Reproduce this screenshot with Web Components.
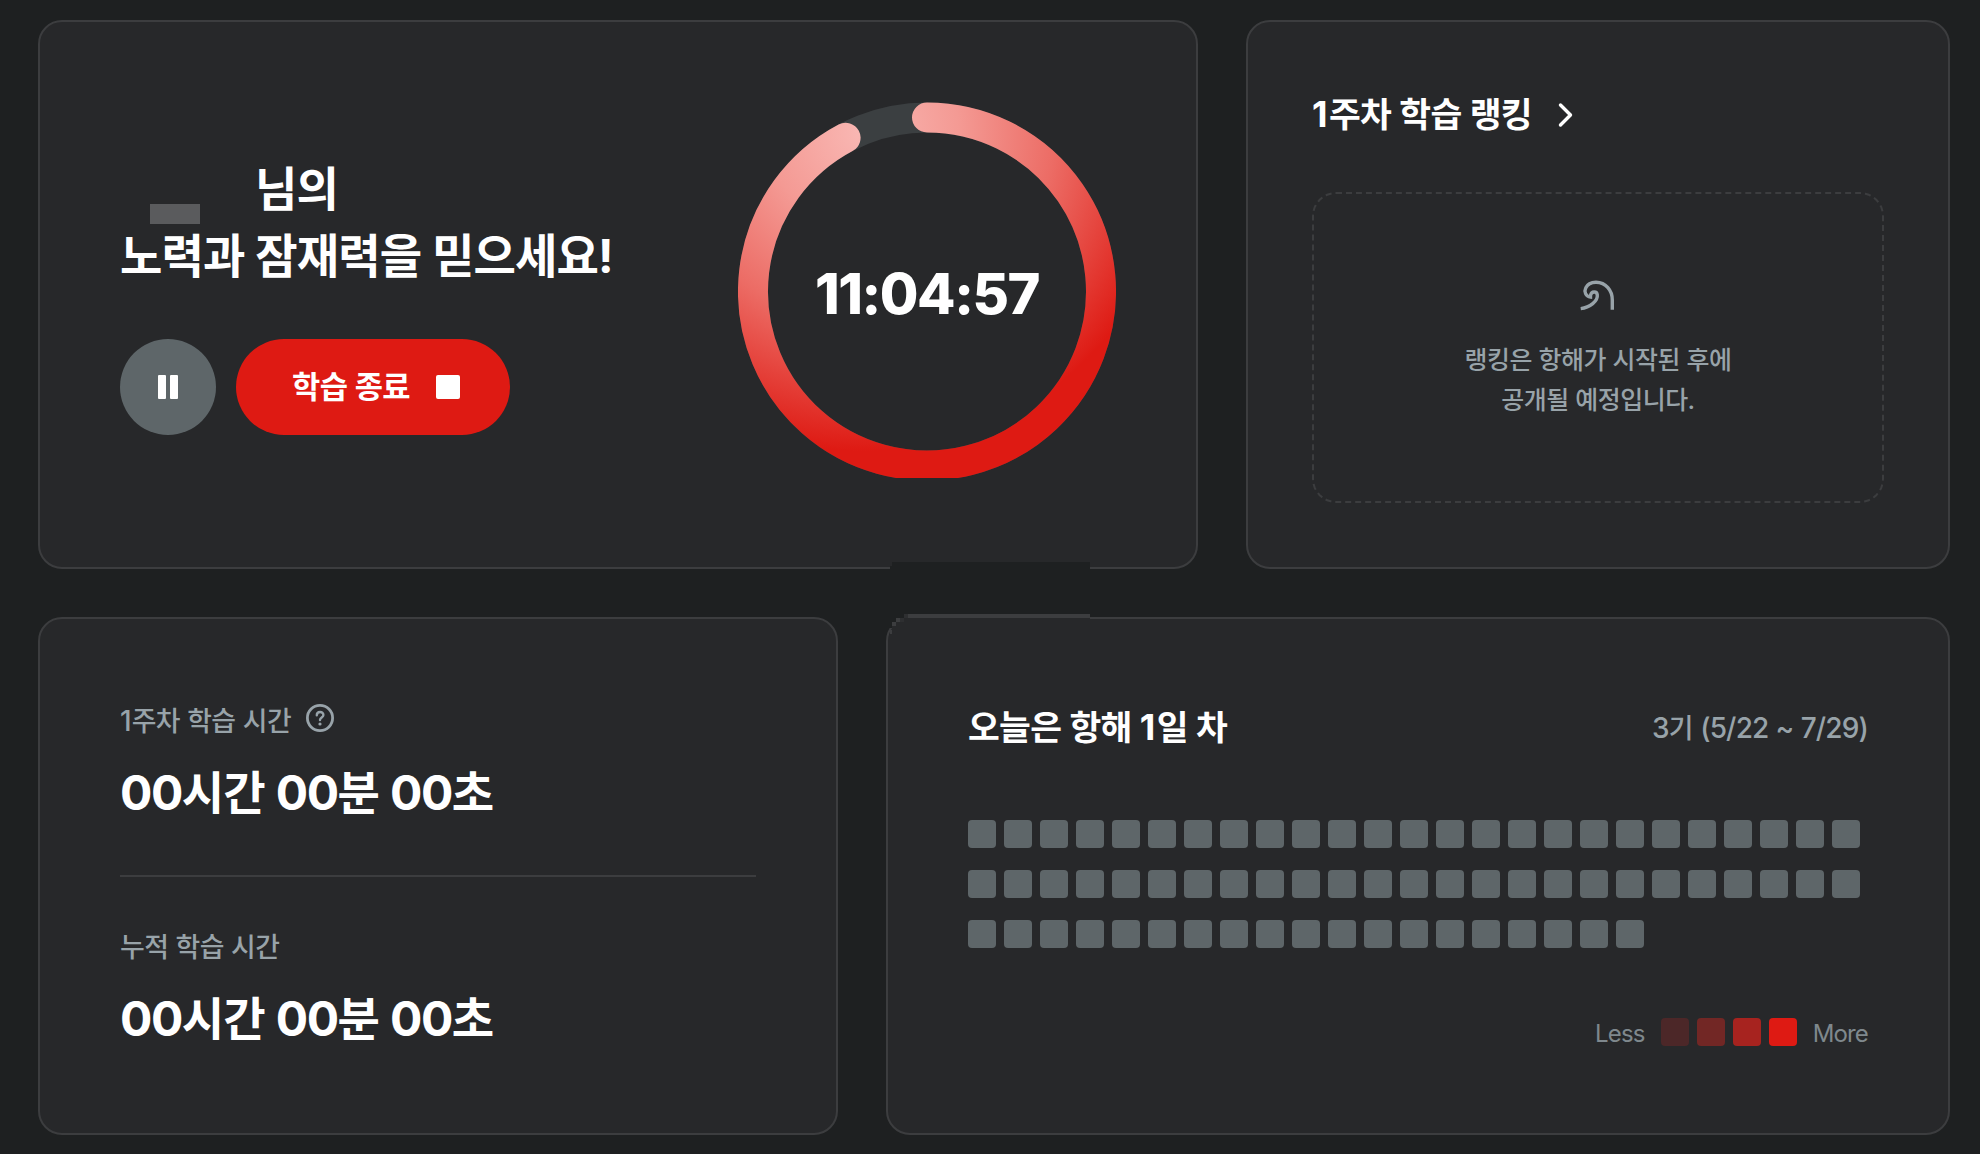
<!DOCTYPE html>
<html lang="ko">
<head>
<meta charset="utf-8">
<title>학습 대시보드</title>
<style>
	html, body {
		margin: 0;
		height: 100%;
		background: #1e2021;
	}

	body {
		overflow: hidden;
		color: #fff;
		font-family: Inter, "Noto Sans CJK KR", sans-serif;
	}
</style>
</head>
<body>
<study-dashboard></study-dashboard>

<script>
function render(el, html) {
	const template = document.createElement('template');
	template.innerHTML = html;
	el.attachShadow({ mode: 'open' }).appendChild(template.content.cloneNode(true));
}

// Korean line: hangul is set a bit smaller and tighter than the digits around it
class KoText extends HTMLElement {
	constructor() {
		super();
		render(this, `
		<style>
			:host {
				display: block;
				white-space: nowrap;
				font-size: calc(var(--size) * 0.96);
				letter-spacing: -0.02em;
				word-spacing: 0.02em;
				line-height: var(--line, 1.4);
			}

			::slotted(b) {
				font-weight: inherit;
				font-size: var(--size);
				line-height: 1;
				letter-spacing: var(--digit, 0);
			}
		</style>
		<slot></slot>`);
	}
}
customElements.define('ko-text', KoText);

class DashCard extends HTMLElement {
	constructor() {
		super();
		render(this, `
		<style>
			:host {
				display: flex;
				box-sizing: border-box;
				background: #27282a;
				border: 2px solid #3c3d3f;
				border-radius: 24px;
			}
		</style>
		<slot></slot>`);
	}
}
customElements.define('dash-card', DashCard);

class RoundButton extends HTMLElement {
	constructor() {
		super();
		render(this, `
		<style>
			:host {
				display: flex;
			}

			button {
				display: flex;
				align-items: center;
				justify-content: center;
				gap: 16px;
				width: 96px;
				height: 96px;
				padding: 0;
				border: 0;
				border-radius: 48px;
				background: #5e6669;
				color: #fff;
				font: inherit;
			}

			:host([primary]) button {
				width: 274px;
				background: #de1a13;
			}
		</style>
		<button><slot></slot></button>`);
	}
}
customElements.define('round-button', RoundButton);

class ProgressRing extends HTMLElement {
	constructor() {
		super();
		render(this, `
		<style>
			:host {
				display: grid;
				width: 378px;
				height: 376px;
			}

			svg, .time {
				grid-area: 1 / 1;
			}

			.time {
				place-self: center;
				margin-top: 8px;
				font-size: 56px;
				font-weight: 800;
				line-height: 1;
				letter-spacing: -0.026em;
			}
		</style>
		<svg width="378" height="376" viewBox="0 0 378 376" fill="none">
			<defs>
				<radialGradient id="fade" gradientUnits="userSpaceOnUse" cx="125" cy="30" r="319">
					<stop offset="0" stop-color="#f9b8b4"/>
					<stop offset="0.3" stop-color="#f49a94"/>
					<stop offset="0.6" stop-color="#ec6c65"/>
					<stop offset="1" stop-color="#de1a13"/>
				</radialGradient>
			</defs>
			<circle cx="189" cy="189.500" r="174" stroke="#3b3f41" stroke-width="30"/>
			<path stroke="url(#fade)" stroke-width="30" stroke-linecap="round"/>
		</svg>
		<div class="time"><slot></slot></div>`);
	}

	connectedCallback() {
		const value = Number(this.getAttribute('value'));
		const angle = value * 2 * Math.PI;
		const x = 189 + 174 * Math.sin(angle);
		const y = 189.5 - 174 * Math.cos(angle);
		// starts at twelve o'clock
		this.shadowRoot.querySelector('path')
			.setAttribute('d', `M189 15.5 A174 174 0 ${value > 0.5 ? 1 : 0} 1 ${x} ${y}`);
	}
}
customElements.define('progress-ring', ProgressRing);

class StudyTime extends HTMLElement {
	constructor() {
		super();
		render(this, `
		<style>
			:host {
				display: flex;
				flex-direction: column;
			}

			.label {
				display: flex;
				align-items: center;
				gap: 15px;
				height: 40px;
				color: #98a3a9;
				font-weight: 500;
				--size: 28px;
			}

			::slotted(svg) {
				margin-bottom: 8px;
			}

			.value {
				margin-top: 19px;
				height: 68px;
				font-weight: 700;
				--size: 48px;
				--digit: -0.03em;
			}
		</style>
		<div class="label"><slot name="label"></slot><slot name="icon"></slot></div>
		<div class="value"><slot name="value"></slot></div>`);
	}
}
customElements.define('study-time', StudyTime);

class DayGrid extends HTMLElement {
	constructor() {
		super();
		render(this, `
		<style>
			:host {
				display: grid;
				grid-template-columns: repeat(25, 28px);
				gap: 22px 8px;
			}

			i {
				height: 28px;
				border-radius: 4px;
				background: #5e6669;
			}
		</style>`);
	}

	connectedCallback() {
		for (let i = 0; i < Number(this.getAttribute('days')); i++) {
			this.shadowRoot.appendChild(document.createElement('i'));
		}
	}
}
customElements.define('day-grid', DayGrid);

class LevelLegend extends HTMLElement {
	constructor() {
		super();
		render(this, `
		<style>
			:host {
				display: flex;
				align-items: center;
				justify-content: flex-end;
				gap: 16px;
				color: #7f888d;
				font-size: 24px;
				line-height: 28px;
				letter-spacing: -0.035em;
			}

			span {
				padding-top: 3px;
			}

			.levels {
				display: flex;
				gap: 8px;
				margin-bottom: 2px;
			}

			i {
				width: 28px;
				height: 28px;
				border-radius: 4px;
			}
		</style>
		<span>Less</span>
		<div class="levels">
			<i style="background: #4c2728"></i>
			<i style="background: #722725"></i>
			<i style="background: #a7231f"></i>
			<i style="background: #de1a13"></i>
		</div>
		<span>More</span>`);
	}
}
customElements.define('level-legend', LevelLegend);

class StudyDashboard extends HTMLElement {
	constructor() {
		super();
		render(this, `
		<style>
			:host {
				display: flex;
				flex-direction: column;
				box-sizing: border-box;
				gap: 48px;
				height: 1154px;
				padding: 20px 30px 19px 38px;
				position: relative;
			}

			.row {
				display: flex;
				gap: 48px;
			}

			.top { height: 549px; }
			.bottom { height: 518px; }

			.timer {
				width: 1160px;
				padding: 80px 80px 0 80px;
				justify-content: space-between;
			}

			.cheer {
				display: flex;
				flex-direction: column;
				padding-top: 53px;
				font-weight: 700;
				--size: 48px;
				--line: 68px;
			}

			.name {
				display: flex;
				gap: 55px;
				height: 67px;
			}

			.mask {
				width: 50px;
				height: 20px;
				margin: 49px 0 0 30px;
				background: #5a5b5d;
			}

			.buttons {
				display: flex;
				gap: 20px;
				margin-top: 49px;
				--size: 32px;
			}

			.ranking {
				width: 704px;
				flex-direction: column;
				padding: 68px 64px 64px;
			}

			.ranking h2, .today h2 {
				display: flex;
				align-items: center;
				margin: 0;
				font-weight: 700;
				--size: 36px;
				--line: 50px;
				--digit: 0.04em;
			}

			.ranking h2 { gap: 20px; }

			.empty {
				display: flex;
				flex-direction: column;
				align-items: center;
				box-sizing: border-box;
				height: 311px;
				margin-top: 52px;
				padding-top: 76px;
				border: 2px dashed #3c3d3f;
				border-radius: 24px;
				color: #98a3a9;
				font-weight: 500;
				--size: 26px;
				--line: 40px;
			}

			.empty svg { margin-bottom: 20px; }

			.times {
				width: 800px;
				flex-direction: column;
				padding: 83px 80px 0;
			}

			.times hr {
				width: 636px;
				height: 2px;
				margin: 46px 0 51px;
				border: 0;
				background: #3c3d3f;
			}

			.today {
				width: 1064px;
				flex-direction: column;
				padding: 81px 80px 0;
			}

			.head {
				display: flex;
				justify-content: space-between;
				align-items: center;
				height: 56px;
				color: #98a3a9;
			}

			.head h2 { color: #fff; }

			.head .term {
				font-weight: 500;
				--size: 28px;
				--line: 40px;
				--digit: -0.03em;
			}

			day-grid { margin-top: 64px; }
			level-legend { margin-top: 69px; }

			/* lies over the edges of two cards */
			.patch {
				position: absolute;
				left: 890px;
				top: 562px;
			}
		</style>

		<div class="row top">
			<dash-card class="timer">
				<div class="cheer">
					<div class="name"><div class="mask"></div><ko-text>님의</ko-text></div>
					<ko-text>노력과 잠재력을 믿으세요!</ko-text>
					<div class="buttons">
						<round-button>
							<svg width="20" height="24" fill="#fff"><rect width="8" height="24" rx="1"/><rect x="12" width="8" height="24" rx="1"/></svg>
						</round-button>
						<round-button primary>
							<ko-text>학습 종료</ko-text>
							<svg width="28" height="24" overflow="visible" fill="#fff"><rect x="10" width="24" height="24" rx="2"/></svg>
						</round-button>
					</div>
				</div>
				<progress-ring value="0.9225">11:04:57</progress-ring>
			</dash-card>

			<dash-card class="ranking">
				<h2>
					<ko-text><b>1</b>주차 학습 랭킹</ko-text>
					<svg width="28" height="28" fill="none" stroke="#fff" stroke-width="3.400" stroke-linecap="round" stroke-linejoin="round"><path d="M8.500 4 L18.500 14 L8.500 24"/></svg>
				</h2>
				<div class="empty">
					<svg width="56" height="50" viewBox="0 0 56 50" fill="none" stroke="#98a3a9" stroke-width="3.400"><path d="M10.700 38.600 C20 37.500 28 31 27.300 25 C26.800 21 21.500 21 20.500 25.500 L20.500 27 C15.500 26.500 14 21.500 15.700 18 C17.500 14 21.500 12.300 26 12.300 C36 12.500 42.300 20.500 42.300 30 L42.300 39.700"/></svg>
					<ko-text>랭킹은 항해가 시작된 후에</ko-text>
					<ko-text>공개될 예정입니다.</ko-text>
				</div>
			</dash-card>
		</div>

		<div class="row bottom">
			<dash-card class="times">
				<study-time>
					<ko-text slot="label"><b>1</b>주차 학습 시간</ko-text>
					<svg slot="icon" width="28" height="28" fill="none" stroke="#98a3a9" stroke-width="2.800" stroke-linecap="round"><circle cx="14" cy="14" r="12.600"/><path d="M10.800 11.300 C10.800 7 17.400 7 17.400 11 C17.400 13.600 14 13.400 14 16" stroke-width="2.400"/><circle cx="14" cy="20" r="1.600" fill="#98a3a9" stroke="none"/></svg>
					<ko-text slot="value"><b>00</b>시간 <b>00</b>분 <b>00</b>초</ko-text>
				</study-time>
				<hr>
				<study-time>
					<ko-text slot="label">누적 학습 시간</ko-text>
					<ko-text slot="value"><b>00</b>시간 <b>00</b>분 <b>00</b>초</ko-text>
				</study-time>
			</dash-card>

			<dash-card class="today">
				<div class="head">
					<h2><ko-text>오늘은 항해 <b>1</b>일 차</ko-text></h2>
					<ko-text class="term"><b>3</b>기 <b>(5/22 ~ 7/29)</b></ko-text>
				</div>
				<day-grid days="69"></day-grid>
				<level-legend></level-legend>
			</dash-card>
		</div>

		<svg class="patch" width="200" height="76" shape-rendering="crispEdges">
			<path d="M2 0 H200 V52 H18 V56 H6 V60 H2 V66 H0 V4 H2 Z" fill="#1e2021"/>
			<path d="M14 56 H200 V62 H6 V60 H14 Z M2 64 H10 V76 H2 Z" fill="#27282a"/>
			<path d="M14 52 H18 V56 H14 Z M10 56 H14 V60 H10 Z" fill="#2e2f31"/>
			<path d="M18 52 H200 V56 H18 Z M6 56 H10 V60 H6 Z M2 60 H6 V64 H2 Z M0 68 H2 V72 H0 Z" fill="#3c3d3f"/>
		</svg>`);
	}
}
customElements.define('study-dashboard', StudyDashboard);
</script>
</body>
</html>
